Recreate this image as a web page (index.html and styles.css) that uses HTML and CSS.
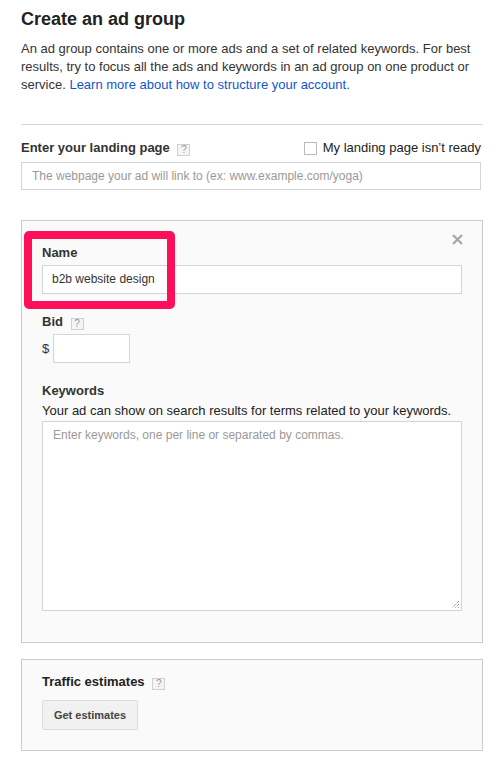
FILE: index.html
```html
<!DOCTYPE html>
<html>

<head>
    <meta charset="utf-8" />
    <meta name="viewport" content="width=device-width, initial-scale=1.0">
    <title>Create an ad group</title>
    <link rel="stylesheet" href="styles.css">
</head>

<body>
    <div class="page">
        <h1>Create an ad group</h1>
        <p class="intro">An ad group contains one or more ads and a set of related keywords. For best results, try to focus all the ads and keywords in an ad group on one product or service. <a href="#">Learn more about how to structure your account.</a></p>

        <div class="landing">
            <div class="landingHead">
                <span class="label">Enter your landing page <span class="help">?</span></span>
                <label class="notReady"><span class="checkbox"></span>My landing page isn’t ready</label>
            </div>
            <div class="field">The webpage your ad will link to (ex: www.example.com/yoga)</div>
        </div>

        <div class="panel groupPanel">
            <span class="close">
                <svg width="11" height="11" viewBox="0 0 11 11">
                    <path d="M1 1 L10 10 M10 1 L1 10" stroke="#a6a6a6" stroke-width="2.2" />
                </svg>
            </span>
            <div class="highlight"></div>

            <div class="label">Name</div>
            <div class="field filled">b2b website design</div>

            <div class="label bidLabel">Bid <span class="help">?</span></div>
            <div class="bidRow">
                <span class="dollar">$</span>
                <div class="field bidField"></div>
            </div>

            <div class="label kwLabel">Keywords</div>
            <div class="kwDesc">Your ad can show on search results for terms related to your keywords.</div>
            <div class="field kwArea">Enter keywords, one per line or separated by commas.
                <svg class="grip" width="9" height="9" viewBox="0 0 9 9">
                    <path d="M8 1 L1 8 M8 4 L4 8 M8 7 L7 8" stroke="#777" stroke-width="1" stroke-dasharray="1 1" />
                </svg>
            </div>
        </div>

        <div class="panel trafficPanel">
            <div class="label">Traffic estimates <span class="help">?</span></div>
            <button class="estBtn">Get estimates</button>
        </div>
    </div>
</body>

</html>
```

FILE: styles.css
```css
* {
    box-sizing: border-box;
}

h1,
p,
body,
div {
    margin: 0px;
    padding: 0px;
}

body {
    font-family: "Liberation Sans", Arial, sans-serif;
    font-size: 13px;
    line-height: 18px;
    color: #222;
    background-color: white;
}

.page {
    width: 462px;
    margin-left: 21px;
}

h1 {
    font-size: 18px;
    line-height: 22px;
    font-weight: bold;
    color: #222;
    margin-top: 8px;
}

.intro {
    margin-top: 10px;
    color: #333;
}

.intro a {
    color: #15c;
    text-decoration: none;
}

.landing {
    margin-top: 30px;
    border-top: 1px solid #d4d4d4;
    padding-top: 14px;
}

.landingHead {
    display: flex;
    justify-content: space-between;
    align-items: center;
    margin-bottom: 5px;
}

.label {
    font-weight: bold;
    color: #333;
}

.help {
    display: inline-block;
    width: 13px;
    height: 12px;
    margin-left: 4px;
    border: 1px solid #d0d0d0;
    background-color: #f4f4f4;
    color: #999;
    font-size: 10px;
    line-height: 10px;
    font-weight: normal;
    text-align: center;
    vertical-align: -1px;
}

.notReady {
    display: flex;
    align-items: center;
    color: #222;
    margin-right: 2px;
}

.checkbox {
    width: 13px;
    height: 13px;
    border: 1px solid #bbb;
    background-color: white;
    margin-right: 6px;
}

.field {
    height: 28px;
    border: 1px solid #d4d4d4;
    background-color: white;
    color: #999;
    font-size: 12px;
    padding: 4px 10px;
    line-height: 18px;
}

.landing .field {
    width: 460px;
}

.panel {
    position: relative;
    border: 1px solid #ccc;
    background-color: #fafafa;
}

.groupPanel {
    margin-top: 30px;
    padding: 23px 20px 31px 20px;
}

.close {
    position: absolute;
    top: 13px;
    right: 19px;
    width: 11px;
    height: 11px;
}

.close svg {
    display: block;
}

.highlight {
    position: absolute;
    left: 2px;
    top: 10px;
    width: 151px;
    height: 78px;
    border: 8px solid #fd0f5a;
    border-radius: 5px;
}

.groupPanel .label {
    margin-bottom: 3px;
}

.filled {
    color: #333;
    padding-left: 9px;
    height: 29px;
}

.bidLabel {
    margin-top: 19px;
}

.bidRow {
    display: flex;
    align-items: center;
    margin-top: 1px;
}

.dollar {
    color: #333;
    width: 11px;
}

.bidField {
    width: 77px;
    height: 29px;
}

.groupPanel .kwLabel {
    margin-top: 19px;
    margin-bottom: 2px;
}

.kwDesc {
    color: #222;
}

.kwArea {
    position: relative;
    height: 190px;
    margin-top: 1px;
    padding-top: 4px;
}

.grip {
    position: absolute;
    right: 1px;
    bottom: 1px;
}

.trafficPanel {
    margin-top: 16px;
    padding: 13px 20px 20px 20px;
}

.trafficPanel .label {
    color: #222;
}

.estBtn {
    display: block;
    margin-top: 9px;
    width: 96px;
    height: 30px;
    border: 1px solid #dcdcdc;
    border-radius: 2px;
    background-color: #f1f1f1;
    color: #444;
    font-family: "Liberation Sans", Arial, sans-serif;
    font-size: 11px;
    font-weight: bold;
    padding: 0px;
}
```
